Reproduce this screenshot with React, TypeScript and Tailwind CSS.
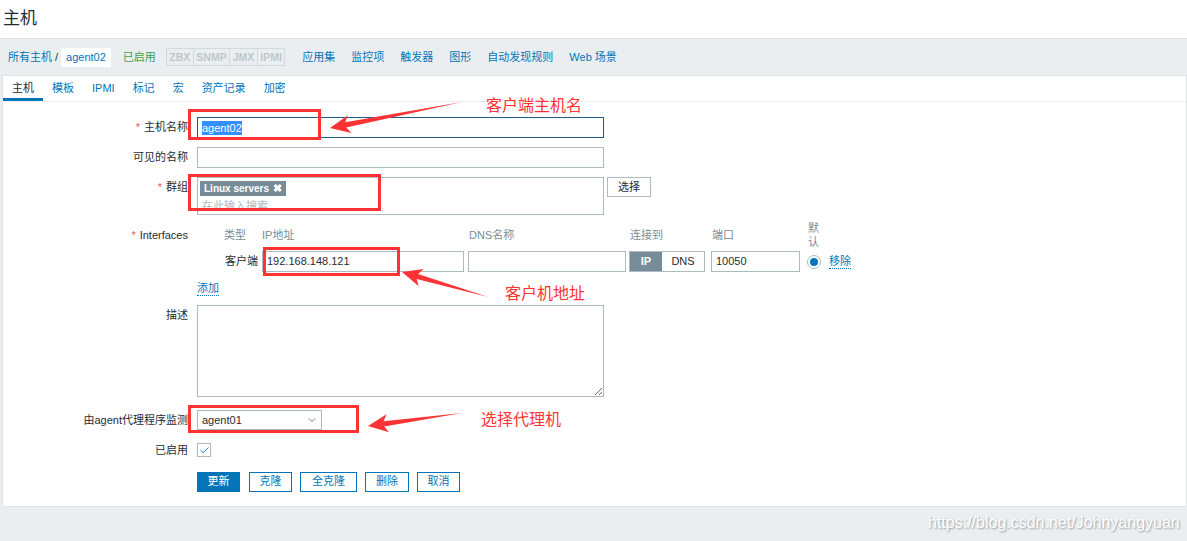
import { Check, ChevronDown } from 'lucide-react';

type Pt = [number, number];

function arrowPoints(tip: Pt, tail: Pt, headLen = 20, headHalf = 9, shaftHalf = 2.6) {
  const dx = tail[0] - tip[0];
  const dy = tail[1] - tip[1];
  const len = Math.hypot(dx, dy);
  const ux = dx / len;
  const uy = dy / len;
  const px = -uy;
  const py = ux;
  const bx = tip[0] + ux * headLen;
  const by = tip[1] + uy * headLen;
  const nx = bx - ux * 4;
  const ny = by - uy * 4;
  const pts: Pt[] = [
    tip,
    [bx + px * headHalf, by + py * headHalf],
    [nx + px * shaftHalf, ny + py * shaftHalf],
    tail,
    [nx - px * shaftHalf, ny - py * shaftHalf],
    [bx - px * headHalf, by - py * headHalf],
  ];
  return pts.map((p) => p.join(',')).join(' ');
}

const navLinks = ['应用集', '监控项', '触发器', '图形', '自动发现规则', 'Web 场景'];
const tabs = ['主机', '模板', 'IPMI', '标记', '宏', '资产记录', '加密'];
const tags = ['ZBX', 'SNMP', 'JMX', 'IPMI'];

function Label({ text, req, tall }: { text: string; req?: boolean; tall?: boolean }) {
  return (
    <div className={`w-[185px] shrink-0 text-right text-[#1f2c33] ${tall ? 'leading-[28px]' : 'leading-[21px]'}`}>
      {req && <span className="mr-[4px] text-[#e45959]">*</span>}
      {text}
    </div>
  );
}

export default function App() {
  return (
    <div className="relative h-[541px] w-[1187px] overflow-hidden bg-[#ebeef0] font-['Liberation_Sans','Noto_Sans_CJK_SC',sans-serif] text-[11px]">
      {/* header */}
      <div className="flex h-[39px] items-center border-b border-[#dfe4e7] bg-white pl-[3px] text-[17px] text-[#1f2c33]">
        主机
      </div>

      {/* host nav */}
      <div className="flex h-[36px] items-center pl-[8px] text-[#0275b8]">
        <span>所有主机</span>
        <span className="mx-[3px] text-[#1f2c33]">/</span>
        <span className="bg-white px-[5px] leading-[19px]">agent02</span>
        <span className="ml-[12px] text-[#429e47]">已启用</span>
        <div className="ml-[10px] flex h-[18px] border border-[#d2d9dd] text-[10.5px] font-bold text-[#bdc8cd]">
          {tags.map((t, i) => (
            <span key={t} className={`px-[2.5px] leading-[16px] ${i > 0 ? 'border-l border-[#d2d9dd]' : ''}`}>
              {t}
            </span>
          ))}
        </div>
        <div className="ml-[17px] flex gap-[16px]">
          {navLinks.map((l) => (
            <span key={l}>{l}</span>
          ))}
        </div>
      </div>

      {/* panel */}
      <div className="ml-[2px] border border-[#dfe4e7] bg-white">
        <div className="flex h-[26px] border-b border-[#ebeef0]">
          {tabs.map((t, i) => (
            <div
              key={t}
              className={`flex items-center px-[9px] ${
                i === 0 ? 'border-b-[3px] border-[#0275b8] pt-[3px] text-[#1f2c33]' : 'text-[#0275b8]'
              }`}
            >
              {t}
            </div>
          ))}
        </div>

        <div className="pb-[14px] pt-[15px]">
          {/* host name */}
          <div className="flex">
            <Label text="主机名称" req />
            <div className="ml-[9px] flex h-[21px] w-[407px] items-center border border-[#1f5c8b] px-[4px] text-[#1f2c33]">
              <span className="bg-[#3390ff] leading-[14px] text-white">agent02</span>
            </div>
          </div>

          {/* visible name */}
          <div className="mt-[9px] flex">
            <Label text="可见的名称" />
            <div className="ml-[9px] h-[21px] w-[407px] border border-[#acbbc2]" />
          </div>

          {/* groups */}
          <div className="mt-[9px] flex">
            <Label text="群组" req />
            <div className="ml-[9px] h-[38px] w-[407px] border border-[#acbbc2] px-[2px] pt-[2px]">
              <span className="inline-flex h-[15px] items-center gap-[4px] bg-[#768d99] px-[4px] text-[10px] font-bold text-white">
                Linux servers <span className="text-[11px]">✖</span>
              </span>
              <div className="mt-[2px] pl-[2px] leading-[15px] text-[#acbbc2]">在此输入搜索</div>
            </div>
            <button className="ml-[3px] h-[20px] w-[44px] border border-[#acbbc2] bg-white text-[#1f2c33]">
              选择
            </button>
          </div>

          {/* interfaces */}
          <div className="mt-[6px] flex">
            <Label text="Interfaces" req tall />
            <div className="ml-[9px]">
              <div className="flex h-[28px] items-center text-[#768d99]">
                <span className="w-[65px] pl-[27px]">类型</span>
                <span className="w-[207px]">IP地址</span>
                <span className="w-[161px]">DNS名称</span>
                <span className="w-[82px]">连接到</span>
                <span className="w-[96px]">端口</span>
                <span className="w-[14px] leading-[14px]">默认</span>
              </div>
              <div className="mt-[2px] flex h-[21px] items-center">
                <span className="w-[65px] pl-[28px] text-[#1f2c33]">客户端</span>
                <div className="flex h-[21px] w-[202px] items-center border border-[#acbbc2] px-[4px] text-[#1f2c33]">
                  192.168.148.121
                </div>
                <div className="ml-[4px] h-[21px] w-[158px] border border-[#acbbc2]" />
                <div className="ml-[3px] flex h-[21px] w-[76px] border border-[#acbbc2]">
                  <span className="flex w-[32px] items-center justify-center bg-[#768d99] font-bold text-white">IP</span>
                  <span className="flex flex-1 items-center justify-center text-[#1f2c33]">DNS</span>
                </div>
                <div className="ml-[6px] flex h-[21px] w-[89px] items-center border border-[#acbbc2] px-[4px] text-[#1f2c33]">
                  10050
                </div>
                <div className="ml-[7px] flex h-[14px] w-[14px] items-center justify-center rounded-full border border-[#acbbc2]">
                  <div className="h-[8px] w-[8px] rounded-full bg-[#0275b8]" />
                </div>
                <span className="ml-[8px] border-b border-dotted border-[#0275b8] leading-[13px] text-[#0275b8]">移除</span>
              </div>
            </div>
          </div>

          {/* add */}
          <div className="mt-[9px] flex h-[16px] items-center">
            <div className="w-[185px]" />
            <span className="ml-[9px] border-b border-dotted border-[#0275b8] leading-[13px] text-[#0275b8]">添加</span>
          </div>

          {/* description */}
          <div className="mt-[8px] flex">
            <Label text="描述" />
            <textarea className="ml-[9px] h-[92px] w-[407px] border border-[#acbbc2] outline-none" />
          </div>

          {/* proxy */}
          <div className="mt-[13px] flex">
            <div className="w-[185px] shrink-0 text-right leading-[20px] text-[#1f2c33]">由agent代理程序监测</div>
            <div className="ml-[9px] flex h-[20px] w-[125px] items-center justify-between border border-[#acbbc2] pl-[4px] pr-[3px] text-[#1f2c33]">
              agent01
              <ChevronDown size={12} strokeWidth={1.5} className="text-[#4f4f4f]" />
            </div>
          </div>

          {/* enabled */}
          <div className="mt-[12px] flex items-center">
            <div className="w-[185px] shrink-0 text-right text-[#1f2c33]">已启用</div>
            <div className="ml-[9px] flex h-[14px] w-[14px] items-center justify-center border border-[#acbbc2]">
              <Check size={11} strokeWidth={2} className="text-[#0275b8]" />
            </div>
          </div>

          {/* buttons */}
          <div className="mt-[13px] flex h-[20px] pl-[194px] text-[11px]">
            <button className="w-[43px] bg-[#0275b8] text-white">更新</button>
            <button className="ml-[9px] w-[43px] border border-[#0275b8] text-[#0275b8]">克隆</button>
            <button className="ml-[8px] w-[57px] border border-[#0275b8] text-[#0275b8]">全克隆</button>
            <button className="ml-[8px] w-[44px] border border-[#0275b8] text-[#0275b8]">删除</button>
            <button className="ml-[8px] w-[43px] border border-[#0275b8] text-[#0275b8]">取消</button>
          </div>
        </div>
      </div>

      {/* annotations overlay */}
      <svg className="pointer-events-none absolute left-0 top-0" width={1187} height={541}>
        <g fill="none" stroke="#ff3333" strokeWidth={3}>
          <rect x={189.5} y={110.5} width={130} height={28} />
          <rect x={189.5} y={175.5} width={190} height={34} />
          <rect x={264.5} y={248.5} width={134} height={26} />
          <rect x={189.5} y={406.5} width={168} height={25} />
        </g>
        <g fill="#ff3333">
          <polygon points={arrowPoints([330, 128], [462, 102])} />
          <polygon points={arrowPoints([402, 272], [488, 297])} />
          <polygon points={arrowPoints([368, 426], [462, 413])} />
        </g>
      </svg>
      <div className="absolute left-[486px] top-[94px] text-[16px] text-[#ff3333]">客户端主机名</div>
      <div className="absolute left-[505px] top-[282px] text-[16px] text-[#ff3333]">客户机地址</div>
      <div className="absolute left-[481px] top-[408px] text-[16px] text-[#ff3333]">选择代理机</div>

      <div className="absolute left-[928px] top-[511px] text-[16px] text-white [text-shadow:1px_1px_2px_#8f989d]">
        https://blog.csdn.net/Johnyangyuan
      </div>
    </div>
  );
}
